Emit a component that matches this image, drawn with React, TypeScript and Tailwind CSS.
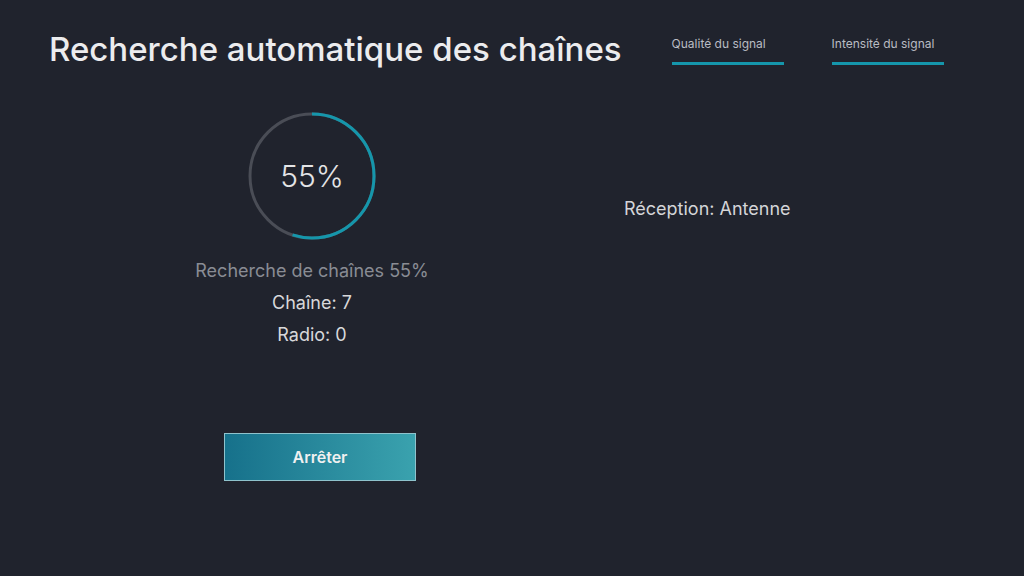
import React from "react";

const ProgressRing: React.FC<{ value: number }> = ({ value }) => {
  const r = 62;
  const c = 2 * Math.PI * r;
  return (
    <div className="relative w-[128px] h-[128px]">
      <svg width="128" height="128" viewBox="0 0 128 128">
        <circle cx="64" cy="64" r={r} fill="none" stroke="#4a4d56" strokeWidth="3" />
        <circle
          cx="64"
          cy="64"
          r={r}
          fill="none"
          stroke="#1596ab"
          strokeWidth="3"
          strokeDasharray={`${(c * value) / 100} ${c}`}
          transform="rotate(-90 64 64)"
        />
      </svg>
      <div className="absolute inset-0 flex items-center justify-center text-[30px] font-light text-[#e4e4e6]">
        {value}%
      </div>
    </div>
  );
};

const Tab: React.FC<{ label: string }> = ({ label }) => (
  <div className="w-[112px]">
    <div className="text-[12px] leading-[16px] text-[#b9bcc3]">{label}</div>
    <div className="mt-[10px] h-[3px] bg-[#1596ab]" />
  </div>
);

export default function App() {
  return (
    <div
      className="w-[1024px] h-[576px] bg-[#20232d] px-[49px] pt-[27px] overflow-hidden"
      style={{ fontFamily: "Inter, Roboto, sans-serif" }}
    >
      <header className="flex items-start">
        <h1 className="text-[33px] leading-[44px] font-medium text-[#ececee]">
          Recherche automatique des chaînes
        </h1>
        <div className="ml-[50px] mt-[9px] flex gap-[48px]">
          <Tab label="Qualité du signal" />
          <Tab label="Intensité du signal" />
        </div>
      </header>

      <main className="flex mt-[41px]">
        <section className="ml-[123px] w-[280px] flex flex-col items-center">
          <ProgressRing value={55} />
          <div className="mt-[15px] text-[18px] leading-[32px] text-[#898c94]">
            Recherche de chaînes 55%
          </div>
          <div className="text-[18px] leading-[32px] text-[#d8d8da]">Chaîne: 7</div>
          <div className="text-[18px] leading-[32px] text-[#d8d8da]">Radio: 0</div>
          <button className="self-start ml-[52px] mt-[82px] w-[192px] h-[48px] border border-[#8fc3cc] bg-gradient-to-r from-[#16718b] to-[#3aa2ae] text-[16px] font-semibold text-[#f0f0f0]">
            Arrêter
          </button>
        </section>

        <section className="ml-[172px] mt-[85px]">
          <div className="text-[18px] leading-[24px] text-[#d4d5d8]">Réception: Antenne</div>
        </section>
      </main>
    </div>
  );
}
